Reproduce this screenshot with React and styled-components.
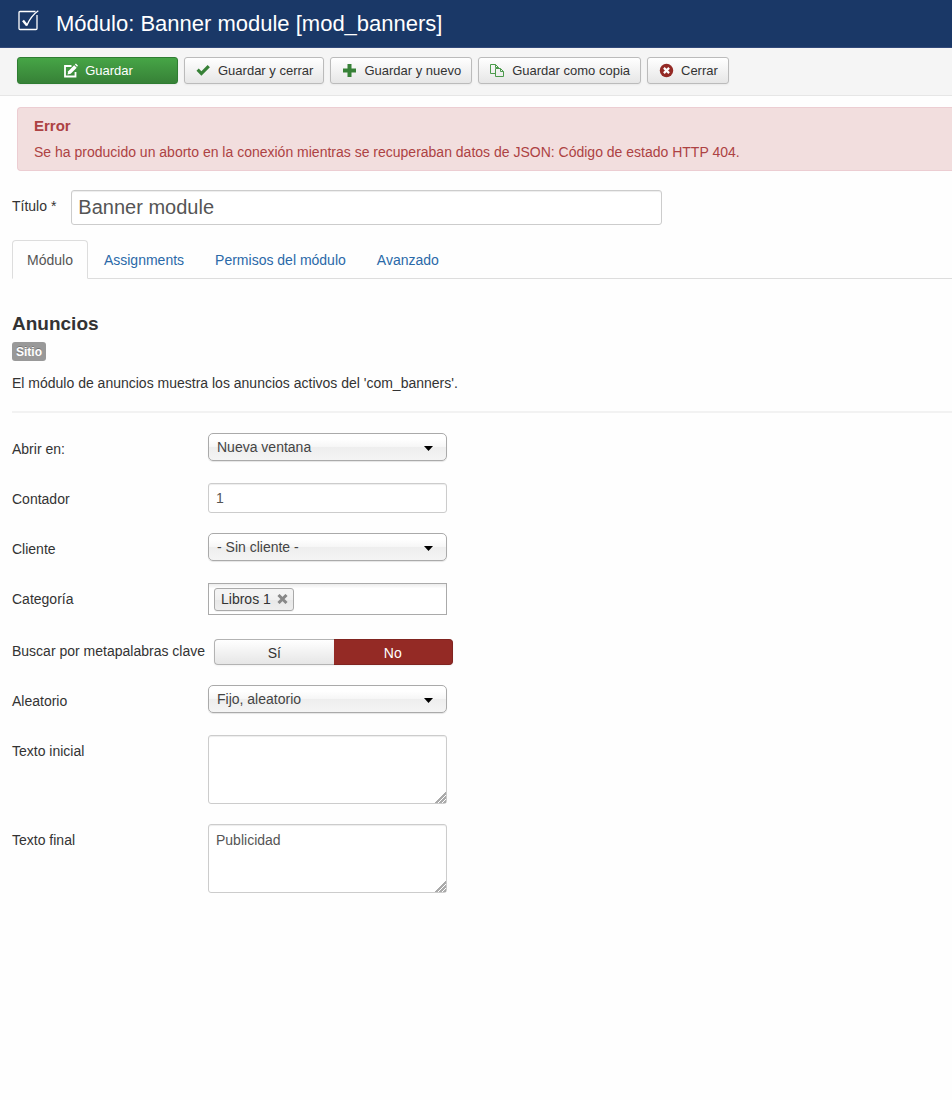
import React, { useState } from "react";
import styled, { createGlobalStyle, css } from "styled-components";

const GlobalStyle = createGlobalStyle`
  *, *::before, *::after { box-sizing: border-box; }
  body {
    margin: 0;
    background: #fefefe;
    color: #333;
    font: 14px/20px "Liberation Sans", Arial, Helvetica, sans-serif;
  }
  button, input, select, textarea { font: inherit; color: inherit; margin: 0; }
`;

const Header = styled.header`
  display: flex;
  align-items: center;
  gap: 17px;
  height: 48px;
  padding: 0 18px;
  background: #1a3867;
  border-bottom: 1px solid #32497a;
  color: #fff;
`;

const HeaderIcon = styled.svg`
  width: 21px;
  height: 22px;
  margin-bottom: 6px;
`;

const PageTitle = styled.h1`
  margin: 0;
  font-size: 22px;
  line-height: 32px;
  font-weight: 400;
`;

const Toolbar = styled.div`
  display: flex;
  flex-wrap: wrap;
  gap: 6px;
  padding: 9px 17px 11px;
  background: #f5f5f5;
  border-bottom: 1px solid #e6e6e6;
`;

const ToolButton = styled.button`
  display: inline-flex;
  align-items: center;
  justify-content: center;
  gap: 7px;
  height: 27px;
  padding: 0 10px;
  border: 1px solid #bbb;
  border-radius: 3px;
  background: linear-gradient(#fff, #e6e6e6);
  box-shadow: 0 1px 2px rgba(0, 0, 0, 0.05);
  font-size: 13px;
  cursor: pointer;

  ${(p) =>
    p.$primary &&
    css`
      min-width: 161px;
      border-color: #2f7d32;
      background: linear-gradient(#46a546, #378137);
      color: #fff;
    `}
`;

const ToolIcon = styled.svg`
  width: 16px;
  height: 16px;
  flex: none;
`;

const Alert = styled.div`
  margin: 11px 0 0 17px;
  padding: 8px 16px 7px;
  border: 1px solid #eccdd2;
  border-right: 0;
  border-radius: 4px 0 0 4px;
  background: #f2dede;
  color: #ad4243;
`;

const AlertTitle = styled.h2`
  margin: 0 0 5px;
  font-size: 15px;
  line-height: 20px;
`;

const AlertText = styled.p`
  margin: 0;
  line-height: 22px;
`;

const TitleRow = styled.div`
  display: flex;
  align-items: center;
  gap: 15px;
  padding: 19px 12px 15px;
`;

const TitleLabel = styled.label`
  flex: none;
  padding-bottom: 3px;
`;

const inputLook = css`
  border: 1px solid #ccc;
  border-radius: 3px;
  background: #fff;
  box-shadow: inset 0 1px 1px rgba(0, 0, 0, 0.075);
  color: #555;
  outline: none;
`;

const TitleInput = styled.input`
  ${inputLook}
  width: 591px;
  min-width: 0;
  height: 35px;
  padding: 0 6px;
  font-size: 20px;
`;

const Tabs = styled.nav`
  display: flex;
  gap: 1px;
  margin-left: 12px;
  border-bottom: 1px solid #ddd;
`;

const Tab = styled.a`
  margin-bottom: -1px;
  padding: 9px 14px 8px;
  border: 1px solid transparent;
  border-radius: 4px 4px 0 0;
  color: #2a69a8;
  text-decoration: none;

  ${(p) =>
    p.$active &&
    css`
      border-color: #ddd;
      border-bottom-color: #fefefe;
      background: #fefefe;
      color: #555;
    `}
`;

const Panel = styled.main`
  padding: 34px 0 40px 12px;
`;

const ModuleName = styled.h3`
  margin: 0 0 7px;
  font-size: 19px;
  line-height: 22px;
`;

const Badge = styled.span`
  display: block;
  width: fit-content;
  padding: 1px 4px 0;
  border-radius: 3px;
  background: #999;
  color: #fff;
  font-size: 12px;
  line-height: 18px;
  font-weight: 700;
  text-shadow: 0 -1px 0 rgba(0, 0, 0, 0.25);
`;

const Description = styled.p`
  margin: 12px 0 18px;
`;

const Divider = styled.hr`
  margin: 0 0 20px;
  border: 0;
  border-top: 2px solid #f2f2f2;
`;

const Form = styled.form`
  display: flex;
  flex-direction: column;
  gap: 20px;
`;

const Row = styled.div`
  display: grid;
  grid-template-columns: 196px minmax(0, 239px);
  align-items: start;
  min-height: 30px;
`;

const labelLook = css`
  padding-top: 6px;
  white-space: nowrap;
`;

const FieldLabel = styled.label`
  ${labelLook}
`;

const GroupLabel = styled.span`
  ${labelLook}
`;

const SelectBox = styled.div`
  display: grid;
  align-items: center;
`;

const Select = styled.select`
  grid-area: 1 / 1;
  appearance: none;
  width: 100%;
  height: 28px;
  padding: 0 28px 0 8px;
  border: 1px solid #aaa;
  border-radius: 5px;
  background: linear-gradient(#fff 20%, #f6f6f6 50%, #eee 52%, #f4f4f4 100%);
  box-shadow: 0 1px 1px rgba(0, 0, 0, 0.1);
  color: #444;
`;

const Caret = styled.svg`
  grid-area: 1 / 1;
  justify-self: end;
  width: 9px;
  height: 5px;
  margin: 3px 14px 0 0;
  pointer-events: none;
`;

const TextInput = styled.input`
  ${inputLook}
  width: 100%;
  height: 30px;
  padding: 0 7px;
`;

const TextArea = styled.textarea`
  ${inputLook}
  display: block;
  width: 100%;
  height: 69px;
  padding: 5px 7px;
  overflow: auto;
  resize: vertical;

  &::-webkit-resizer {
    background:
      linear-gradient(135deg, #fff 60%, transparent 60%),
      repeating-linear-gradient(135deg, #fff 0 1px, #aaa 1px 3px);
  }
`;

const TagBox = styled.div`
  display: flex;
  align-items: center;
  gap: 6px;
  height: 32px;
  padding: 0 5px;
  border: 1px solid #aaa;
  background: linear-gradient(#eee 1%, #fff 15%);
`;

const Tag = styled.span`
  display: flex;
  align-items: center;
  gap: 6px;
  height: 23px;
  padding: 0 5px 0 6px;
  border: 1px solid #aaa;
  border-radius: 3px;
  background: linear-gradient(#f4f4f4 20%, #f0f0f0 50%, #e8e8e8 52%, #eee);
  box-shadow: 0 1px 0 rgba(0, 0, 0, 0.05);
`;

const TagRemove = styled.button`
  display: flex;
  padding: 0;
  border: 0;
  background: none;
  cursor: pointer;
`;

const TagInput = styled.input`
  flex: 1;
  min-width: 0;
  border: 0;
  padding: 0;
  background: none;
  outline: none;
`;

const Toggle = styled.div`
  display: grid;
  grid-template-columns: 1fr 1fr;
  margin: 4px -6px 0 6px;
`;

const HiddenRadio = styled.input`
  position: absolute;
  opacity: 0;
  width: 1px;
  height: 1px;
`;

const ToggleOption = styled.label`
  height: 26px;
  border: 1px solid #b3b3b3;
  background: linear-gradient(#fff, #e6e6e6);
  box-shadow: 0 1px 2px rgba(0, 0, 0, 0.05);
  line-height: 26px;
  text-align: center;
  cursor: pointer;

  &:first-child { border-radius: 4px 0 0 4px; border-right: 0; }
  &:last-child { border-radius: 0 4px 4px 0; border-left: 0; }

  ${(p) =>
    p.$checked &&
    css`
      border-color: #802420;
      background: #942a25;
      color: #fff;
    `}
`;

const icons = {
  edit: (
    <>
      <path d="M9.500 3H3v10.500h10.500V9" fill="none" stroke="#fff" strokeWidth="1.800" />
      <path d="M5.500 11.500l.7-3.200L12.200 2.300l2.500 2.500L8.700 10.800z" fill="#fff" />
      <path d="M12.900 1.600l1-1 2.100 2.100-1 1z" fill="#fff" />
    </>
  ),
  check: <path d="M1.500 7.800l2.200-2.200 2.700 2.700 6.200-6.300 2.300 2.200-8.500 8.600z" fill="#378137" />,
  plus: <path d="M6.500 1h4v4.500H15v4h-4.500V14h-4V9.500H2v-4h4.500z" fill="#378137" />,
  copy: (
    <g fill="none" stroke="#4c9a4c" strokeWidth="1">
      <path d="M6.500 10.500h-5v-9h5l3 3v1M6.500 1.500v3h3" />
      <path d="M6.500 5.500h5l3 3v5h-8zM11.500 5.500v3h3" />
    </g>
  ),
  close: (
    <>
      <circle cx="8.500" cy="7.500" r="6.700" fill="#942a25" />
      <path d="M5.900 4.900l5.200 5.200M11.100 4.900l-5.200 5.200" stroke="#fff" strokeWidth="2.200" />
    </>
  ),
};

const actions = [
  { icon: "edit", text: "Guardar", primary: true },
  { icon: "check", text: "Guardar y cerrar" },
  { icon: "plus", text: "Guardar y nuevo" },
  { icon: "copy", text: "Guardar como copia" },
  { icon: "close", text: "Cerrar" },
];

const tabs = ["Módulo", "Assignments", "Permisos del módulo", "Avanzado"];

function SelectRow({ id, label, options }) {
  return (
    <Row>
      <FieldLabel htmlFor={id}>{label}</FieldLabel>
      <SelectBox>
        <Select id={id}>
          {options.map((o) => (
            <option key={o}>{o}</option>
          ))}
        </Select>
        <Caret viewBox="0 0 9 5" aria-hidden="true">
          <path d="M0 0h9L4.500 5z" fill="#000" />
        </Caret>
      </SelectBox>
    </Row>
  );
}

export default function App() {
  const [metaSearch, setMetaSearch] = useState("No");
  const [tags, setTags] = useState(["Libros 1"]);
  const [activeTab, setActiveTab] = useState("Módulo");

  return (
    <>
      <GlobalStyle />
      <Header>
        <HeaderIcon viewBox="0 0 21 22" fill="none" stroke="#fff" aria-hidden="true">
          <path d="M17.500 1.500H2a1 1 0 0 0-1 1v16a1 1 0 0 0 1 1h16a1 1 0 0 0 1-1V5" strokeWidth="1.300" />
          <path d="M5 10.500l4 5" strokeWidth="2.400" />
          <path d="M8.800 15.500C11.500 9 15.500 4 20.300.7" strokeWidth="1.300" />
        </HeaderIcon>
        <PageTitle>Módulo: Banner module [mod_banners]</PageTitle>
      </Header>

      <Toolbar>
        {actions.map((a) => (
          <ToolButton key={a.text} type="button" $primary={a.primary}>
            <ToolIcon viewBox="0 0 16 16" aria-hidden="true">
              {icons[a.icon]}
            </ToolIcon>
            {a.text}
          </ToolButton>
        ))}
      </Toolbar>

      <Alert role="alert">
        <AlertTitle>Error</AlertTitle>
        <AlertText>
          Se ha producido un aborto en la conexión mientras se recuperaban datos de JSON: Código de estado HTTP 404.
        </AlertText>
      </Alert>

      <TitleRow>
        <TitleLabel htmlFor="title">Título *</TitleLabel>
        <TitleInput id="title" type="text" defaultValue="Banner module" />
      </TitleRow>

      <Tabs>
        {tabs.map((t) => (
          <Tab key={t} href="#" $active={t === activeTab} onClick={() => setActiveTab(t)}>
            {t}
          </Tab>
        ))}
      </Tabs>

      <Panel>
        <ModuleName>Anuncios</ModuleName>
        <Badge>Sitio</Badge>
        <Description>El módulo de anuncios muestra los anuncios activos del 'com_banners'.</Description>
        <Divider />

        <Form>
          <SelectRow id="target" label="Abrir en:" options={["Nueva ventana"]} />
          <Row>
            <FieldLabel htmlFor="count">Contador</FieldLabel>
            <TextInput id="count" type="text" defaultValue="1" />
          </Row>
          <SelectRow id="client" label="Cliente" options={["- Sin cliente -"]} />
          <Row>
            <FieldLabel htmlFor="category">Categoría</FieldLabel>
            <TagBox>
              {tags.map((tag) => (
                <Tag key={tag}>
                  {tag}
                  <TagRemove
                    type="button"
                    aria-label={`Quitar ${tag}`}
                    onClick={() => setTags(tags.filter((t) => t !== tag))}
                  >
                    <svg width="11" height="10" viewBox="0 0 11 10" aria-hidden="true">
                      <path d="M1.500 1l8 8M9.500 1l-8 8" stroke="#888" strokeWidth="3" />
                    </svg>
                  </TagRemove>
                </Tag>
              ))}
              <TagInput id="category" type="text" />
            </TagBox>
          </Row>
          <Row role="radiogroup" aria-labelledby="meta-label">
            <GroupLabel id="meta-label">Buscar por metapalabras clave</GroupLabel>
            <Toggle>
              {["Sí", "No"].map((v) => (
                <ToggleOption key={v} $checked={metaSearch === v}>
                  <HiddenRadio
                    type="radio"
                    name="meta"
                    checked={metaSearch === v}
                    onChange={() => setMetaSearch(v)}
                  />
                  {v}
                </ToggleOption>
              ))}
            </Toggle>
          </Row>
          <SelectRow id="order" label="Aleatorio" options={["Fijo, aleatorio"]} />
          <Row>
            <FieldLabel htmlFor="header">Texto inicial</FieldLabel>
            <TextArea id="header" />
          </Row>
          <Row>
            <FieldLabel htmlFor="footer">Texto final</FieldLabel>
            <TextArea id="footer" defaultValue="Publicidad" />
          </Row>
        </Form>
      </Panel>
    </>
  );
}
